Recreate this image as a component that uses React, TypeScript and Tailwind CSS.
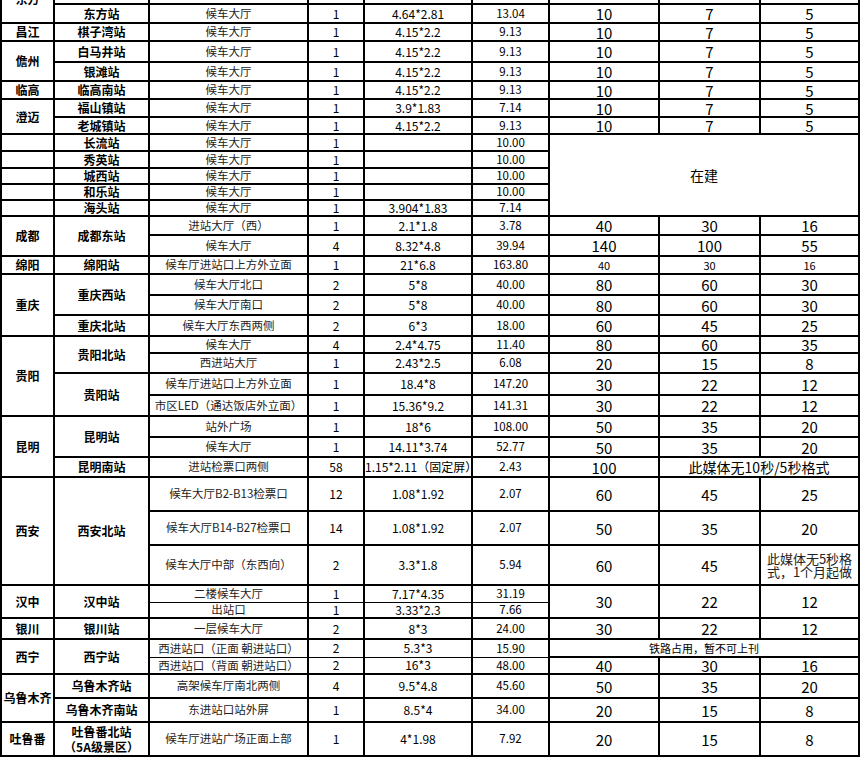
import React from 'react';

interface TdProps {
  children?: React.ReactNode;
  rs?: number;
  cs?: number;
  className?: string;
  thinTop?: boolean;
  thinBottom?: boolean;
}

const Td: React.FC<TdProps> = ({ children, rs, cs, className = '', thinTop, thinBottom }) => (
  <td
    rowSpan={rs}
    colSpan={cs}
    className={`border-x-2 ${thinTop ? 'border-t' : 'border-t-2'} ${thinBottom ? 'border-b' : 'border-b-2'} border-black p-0 text-center align-middle leading-none ${className}`}
  >
    {children}
  </td>
);

const region = 'text-[12px] font-bold';
const station = 'text-[12px] font-bold';
const place = 'text-[11.5px] text-[#222]';
const num = 'text-[12px]';
const area = 'text-[11.5px]';
const price = 'text-[15px]';
const small = 'text-[11px]';

interface PricesProps {
  a: string;
  b: string;
  c: string;
  cls?: string;
  rs?: number;
}

const Prices: React.FC<PricesProps> = ({ a, b, c, cls = price, rs }) => (
  <>
    <Td className={cls} rs={rs}>{a}</Td>
    <Td className={cls} rs={rs}>{b}</Td>
    <Td className={cls} rs={rs}>{c}</Td>
  </>
);

const App: React.FC = () => {
  return (
    <div className="h-[757px] w-[860px] overflow-hidden bg-white text-black font-['Noto_Sans_CJK_SC','Noto_Sans',sans-serif]">
      <table className="-mt-[26px] w-[858px] table-fixed border-collapse">
        <colgroup>
          <col className="w-[53px]" />
          <col className="w-[95px]" />
          <col className="w-[159px]" />
          <col className="w-[56px]" />
          <col className="w-[108px]" />
          <col className="w-[77px]" />
          <col className="w-[110px]" />
          <col className="w-[101px]" />
          <col className="w-[99px]" />
        </colgroup>
        <tbody>
          <tr className="h-[29px]">
            <Td className={region} rs={2}>东方</Td>
            <Td className={station}>八所站</Td>
            <Td className={place}>候车大厅</Td>
            <Td className={num}>1</Td>
            <Td className={num}>4.15*2.2</Td>
            <Td className={area}>9.13</Td>
            <Prices a="10" b="7" c="5" />
          </tr>
          <tr className="h-[19px]">
            <Td className={station}>东方站</Td>
            <Td className={place}>候车大厅</Td>
            <Td className={num}>1</Td>
            <Td className={num}>4.64*2.81</Td>
            <Td className={area}>13.04</Td>
            <Prices a="10" b="7" c="5" />
          </tr>
          <tr className="h-[18px]">
            <Td className={region}>昌江</Td>
            <Td className={station}>棋子湾站</Td>
            <Td className={place}>候车大厅</Td>
            <Td className={num}>1</Td>
            <Td className={num}>4.15*2.2</Td>
            <Td className={area}>9.13</Td>
            <Prices a="10" b="7" c="5" />
          </tr>
          <tr className="h-[21px]">
            <Td className={region} rs={2}>儋州</Td>
            <Td className={station}>白马井站</Td>
            <Td className={place}>候车大厅</Td>
            <Td className={num}>1</Td>
            <Td className={num}>4.15*2.2</Td>
            <Td className={area}>9.13</Td>
            <Prices a="10" b="7" c="5" />
          </tr>
          <tr className="h-[19px]">
            <Td className={station}>银滩站</Td>
            <Td className={place}>候车大厅</Td>
            <Td className={num}>1</Td>
            <Td className={num}>4.15*2.2</Td>
            <Td className={area}>9.13</Td>
            <Prices a="10" b="7" c="5" />
          </tr>
          <tr className="h-[18px]">
            <Td className={region}>临高</Td>
            <Td className={station}>临高南站</Td>
            <Td className={place}>候车大厅</Td>
            <Td className={num}>1</Td>
            <Td className={num}>4.15*2.2</Td>
            <Td className={area}>9.13</Td>
            <Prices a="10" b="7" c="5" />
          </tr>
          <tr className="h-[18px]">
            <Td className={region} rs={2}>澄迈</Td>
            <Td className={station}>福山镇站</Td>
            <Td className={place}>候车大厅</Td>
            <Td className={num}>1</Td>
            <Td className={num}>3.9*1.83</Td>
            <Td className={area}>7.14</Td>
            <Prices a="10" b="7" c="5" />
          </tr>
          <tr className="h-[15px]">
            <Td className={station}>老城镇站</Td>
            <Td className={place}>候车大厅</Td>
            <Td className={num}>1</Td>
            <Td className={num}>4.15*2.2</Td>
            <Td className={area}>9.13</Td>
            <Prices a="10" b="7" c="5" />
          </tr>
          <tr className="h-[17px]">
            <Td />
            <Td className={station}>长流站</Td>
            <Td className={place}>候车大厅</Td>
            <Td className={num}>1</Td>
            <Td />
            <Td className={area}>10.00</Td>
            <Td className="text-[14px]" rs={5} cs={3}>在建</Td>
          </tr>
          <tr className="h-[17px]">
            <Td />
            <Td className={station}>秀英站</Td>
            <Td className={place}>候车大厅</Td>
            <Td className={num}>1</Td>
            <Td />
            <Td className={area}>10.00</Td>
          </tr>
          <tr className="h-[16px]">
            <Td />
            <Td className={station}>城西站</Td>
            <Td className={place}>候车大厅</Td>
            <Td className={num}>1</Td>
            <Td />
            <Td className={area}>10.00</Td>
          </tr>
          <tr className="h-[16px]">
            <Td />
            <Td className={station}>和乐站</Td>
            <Td className={place}>候车大厅</Td>
            <Td className={num}>1</Td>
            <Td />
            <Td className={area}>10.00</Td>
          </tr>
          <tr className="h-[16px]">
            <Td />
            <Td className={station}>海头站</Td>
            <Td className={place}>候车大厅</Td>
            <Td className={num}>1</Td>
            <Td className={num}>3.904*1.83</Td>
            <Td className={area}>7.14</Td>
          </tr>
          <tr className="h-[19px]">
            <Td className={region} rs={2}>成都</Td>
            <Td className={station} rs={2}>成都东站</Td>
            <Td className={place}>进站大厅（西）</Td>
            <Td className={num}>1</Td>
            <Td className={num}>2.1*1.8</Td>
            <Td className={area}>3.78</Td>
            <Prices a="40" b="30" c="16" />
          </tr>
          <tr className="h-[21px]">
            <Td className={place}>候车大厅</Td>
            <Td className={num}>4</Td>
            <Td className={num}>8.32*4.8</Td>
            <Td className={area}>39.94</Td>
            <Prices a="140" b="100" c="55" />
          </tr>
          <tr className="h-[18px]">
            <Td className={region}>绵阳</Td>
            <Td className={station}>绵阳站</Td>
            <Td className={place}>候车厅进站口上方外立面</Td>
            <Td className={num}>1</Td>
            <Td className={num}>21*6.8</Td>
            <Td className={area}>163.80</Td>
            <Prices a="40" b="30" c="16" cls={small} />
          </tr>
          <tr className="h-[21px]">
            <Td className={region} rs={3}>重庆</Td>
            <Td className={station} rs={2}>重庆西站</Td>
            <Td className={place}>候车大厅北口</Td>
            <Td className={num}>2</Td>
            <Td className={num}>5*8</Td>
            <Td className={area}>40.00</Td>
            <Prices a="80" b="60" c="30" />
          </tr>
          <tr className="h-[20px]">
            <Td className={place}>候车大厅南口</Td>
            <Td className={num}>2</Td>
            <Td className={num}>5*8</Td>
            <Td className={area}>40.00</Td>
            <Prices a="80" b="60" c="30" />
          </tr>
          <tr className="h-[21px]">
            <Td className={station}>重庆北站</Td>
            <Td className={place}>候车大厅东西两侧</Td>
            <Td className={num}>2</Td>
            <Td className={num}>6*3</Td>
            <Td className={area}>18.00</Td>
            <Prices a="60" b="45" c="25" />
          </tr>
          <tr className="h-[16px]">
            <Td className={region} rs={4}>贵阳</Td>
            <Td className={station} rs={2}>贵阳北站</Td>
            <Td className={place}>候车大厅</Td>
            <Td className={num}>4</Td>
            <Td className={num}>2.4*4.75</Td>
            <Td className={area}>11.40</Td>
            <Prices a="80" b="60" c="35" />
          </tr>
          <tr className="h-[20px]">
            <Td className={place}>西进站大厅</Td>
            <Td className={num}>1</Td>
            <Td className={num}>2.43*2.5</Td>
            <Td className={area}>6.08</Td>
            <Prices a="20" b="15" c="8" />
          </tr>
          <tr className="h-[22px]">
            <Td className={station} rs={2}>贵阳站</Td>
            <Td className={place}>候车厅进站口上方外立面</Td>
            <Td className={num}>1</Td>
            <Td className={num}>18.4*8</Td>
            <Td className={area}>147.20</Td>
            <Prices a="30" b="22" c="12" />
          </tr>
          <tr className="h-[21px]">
            <Td className={place}>市区LED（通达饭店外立面）</Td>
            <Td className={num}>1</Td>
            <Td className={num}>15.36*9.2</Td>
            <Td className={area}>141.31</Td>
            <Prices a="30" b="22" c="12" />
          </tr>
          <tr className="h-[21px]">
            <Td className={region} rs={3}>昆明</Td>
            <Td className={station} rs={2}>昆明站</Td>
            <Td className={place}>站外广场</Td>
            <Td className={num}>1</Td>
            <Td className={num}>18*6</Td>
            <Td className={area}>108.00</Td>
            <Prices a="50" b="35" c="20" />
          </tr>
          <tr className="h-[20px]">
            <Td className={place}>候车大厅</Td>
            <Td className={num}>1</Td>
            <Td className={num}>14.11*3.74</Td>
            <Td className={area}>52.77</Td>
            <Prices a="50" b="35" c="20" />
          </tr>
          <tr className="h-[20px]">
            <Td className={station}>昆明南站</Td>
            <Td className={place}>进站检票口两侧</Td>
            <Td className={num}>58</Td>
            <Td className={`${num} whitespace-nowrap`}>1.15*2.11（固定屏）</Td>
            <Td className={area}>2.43</Td>
            <Td className={price}>100</Td>
            <Td className="text-[14px]" cs={2}>此媒体无10秒/5秒格式</Td>
          </tr>
          <tr className="h-[34px]">
            <Td className={region} rs={3}>西安</Td>
            <Td className={station} rs={3}>西安北站</Td>
            <Td className={place}>候车大厅B2-B13检票口</Td>
            <Td className={num}>12</Td>
            <Td className={num}>1.08*1.92</Td>
            <Td className={area}>2.07</Td>
            <Prices a="60" b="45" c="25" />
          </tr>
          <tr className="h-[34px]">
            <Td className={place}>候车大厅B14-B27检票口</Td>
            <Td className={num}>14</Td>
            <Td className={num}>1.08*1.92</Td>
            <Td className={area}>2.07</Td>
            <Prices a="50" b="35" c="20" />
          </tr>
          <tr className="h-[40px]">
            <Td className={place}>候车大厅中部（东西向）</Td>
            <Td className={num}>2</Td>
            <Td className={num}>3.3*1.8</Td>
            <Td className={area}>5.94</Td>
            <Td className={price}>60</Td>
            <Td className={price}>45</Td>
            <Td className="text-[13px] leading-[18px] text-[#222]">
              <div className="whitespace-nowrap">此媒体无5秒格</div>
              <div className="whitespace-nowrap">式，1个月起做</div>
            </Td>
          </tr>
          <tr className="h-[17px]">
            <Td className={region} rs={2}>汉中</Td>
            <Td className={station} rs={2}>汉中站</Td>
            <Td className={place} thinBottom>二楼候车大厅</Td>
            <Td className={num} thinBottom>1</Td>
            <Td className={num} thinBottom>7.17*4.35</Td>
            <Td className={area} thinBottom>31.19</Td>
            <Prices a="30" b="22" c="12" rs={2} />
          </tr>
          <tr className="h-[16px]">
            <Td className={place} thinTop>出站口</Td>
            <Td className={num} thinTop>1</Td>
            <Td className={num} thinTop>3.33*2.3</Td>
            <Td className={area} thinTop>7.66</Td>
          </tr>
          <tr className="h-[21px]">
            <Td className={region}>银川</Td>
            <Td className={station}>银川站</Td>
            <Td className={place}>一层候车大厅</Td>
            <Td className={num}>2</Td>
            <Td className={num}>8*3</Td>
            <Td className={area}>24.00</Td>
            <Prices a="30" b="22" c="12" />
          </tr>
          <tr className="h-[18px]">
            <Td className={region} rs={2}>西宁</Td>
            <Td className={station} rs={2}>西宁站</Td>
            <Td className={place} thinBottom>西进站口（正面 朝进站口）</Td>
            <Td className={num} thinBottom>2</Td>
            <Td className={num} thinBottom>5.3*3</Td>
            <Td className={area} thinBottom>15.90</Td>
            <Td className={small} cs={3}>铁路占用，暂不可上刊</Td>
          </tr>
          <tr className="h-[17px]">
            <Td className={place} thinTop>西进站口（背面 朝进站口）</Td>
            <Td className={num} thinTop>2</Td>
            <Td className={num} thinTop>16*3</Td>
            <Td className={area} thinTop>48.00</Td>
            <Prices a="40" b="30" c="16" />
          </tr>
          <tr className="h-[24px]">
            <Td className={region} rs={2}>乌鲁木齐</Td>
            <Td className={station}>乌鲁木齐站</Td>
            <Td className={place}>高架候车厅南北两侧</Td>
            <Td className={num}>4</Td>
            <Td className={num}>9.5*4.8</Td>
            <Td className={area}>45.60</Td>
            <Prices a="50" b="35" c="20" />
          </tr>
          <tr className="h-[24px]">
            <Td className={station}>乌鲁木齐南站</Td>
            <Td className={place}>东进站口站外屏</Td>
            <Td className={num}>1</Td>
            <Td className={num}>8.5*4</Td>
            <Td className={area}>34.00</Td>
            <Prices a="20" b="15" c="8" />
          </tr>
          <tr className="h-[34px]">
            <Td className={region}>吐鲁番</Td>
            <Td className={station}>
              <div className="leading-[15px]">吐鲁番北站</div>
              <div className="leading-[15px]">（5A级景区）</div>
            </Td>
            <Td className={place}>候车厅进站广场正面上部</Td>
            <Td className={num}>1</Td>
            <Td className={num}>4*1.98</Td>
            <Td className={area}>7.92</Td>
            <Prices a="20" b="15" c="8" />
          </tr>
        </tbody>
      </table>
    </div>
  );
};

export default App;
